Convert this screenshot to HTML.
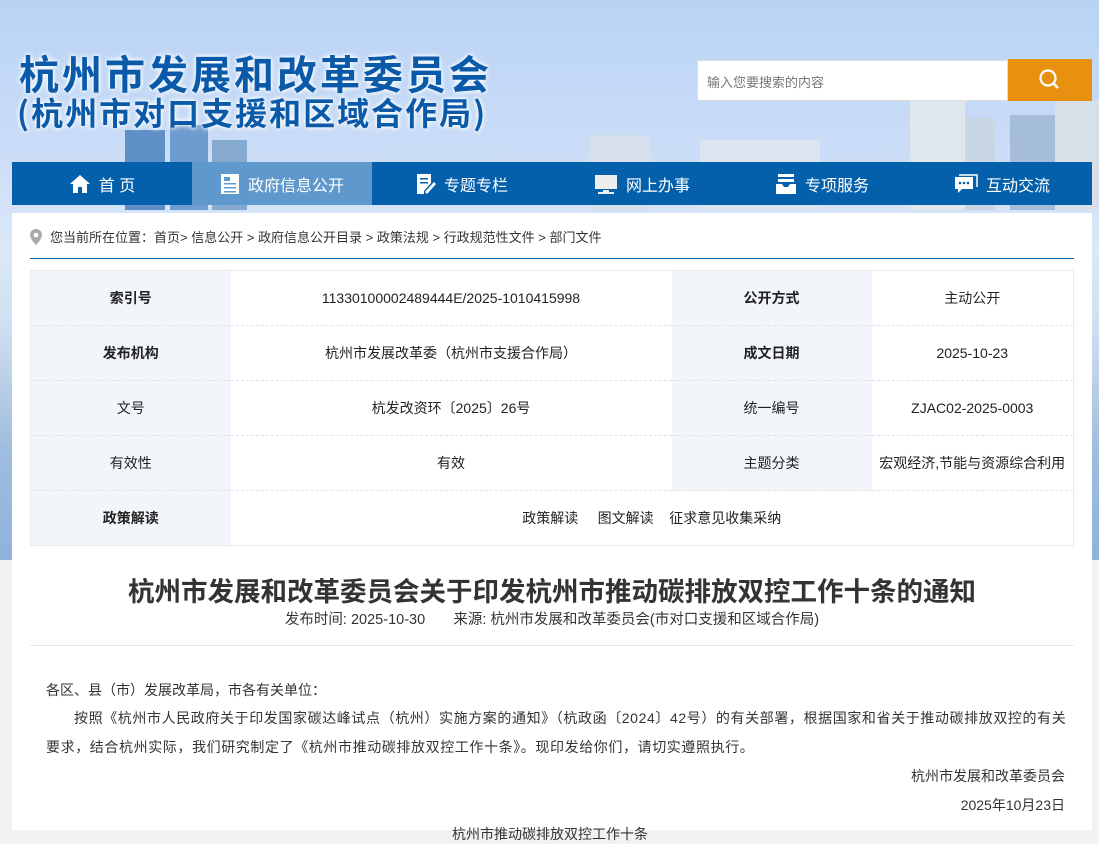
<!DOCTYPE html>
<html><head><meta charset="utf-8"><style>
*{margin:0;padding:0;box-sizing:border-box}
body{width:1099px;height:830px;overflow:hidden;font-family:"Liberation Sans","Noto Sans CJK SC",sans-serif;background:#f2f2f2;position:relative}
.bg{position:absolute;left:0;top:0;width:1099px;height:560px;background:linear-gradient(180deg,#b9d3f5 0%,#c9dcf7 25%,#dbe8f8 45%,#cfe0f2 58%,#b8cde4 70%,#9fbedf 80%,#8fb3dc 100%)}
.bld{position:absolute;background:#7fa6d0}
.logo1{position:absolute;left:19px;top:48px;font-size:40px;font-weight:bold;color:#0b5aa9;letter-spacing:3px;text-shadow:0 0 4px #fff,0 0 6px #fff;font-family:"Noto Sans CJK SC",sans-serif;line-height:48px}
.logo2{position:absolute;left:17px;top:92px;font-size:32px;font-weight:bold;color:#0b5aa9;letter-spacing:2px;text-shadow:0 0 4px #fff,0 0 6px #fff;font-family:"Noto Sans CJK SC",sans-serif;line-height:40px}
.search{position:absolute;left:697px;top:60px;width:311px;height:41px;background:#fff;border:1px solid #ddd;font-size:13px;color:#777;padding:11px 9px}
.sbtn{position:absolute;left:1008px;top:59px;width:84px;height:42px;background:#e8900f}
.nav{position:absolute;left:12px;top:162px;width:1080px;height:43px;background:#0560ab;display:flex}
.nav div{width:180px;height:43px;color:#fff;font-size:16px;display:flex;align-items:center;justify-content:center;gap:8px}
.nav .act{background:#5e98cd}
.main{position:absolute;left:12px;top:213px;width:1080px;height:617px;background:#fff}
.crumb{position:absolute;left:18px;top:14px;font-size:13px;color:#333;display:flex;align-items:center;gap:8px}
.line{position:absolute;left:18px;top:45px;width:1044px;height:1px;background:#0b62b0}
table{position:absolute;left:18px;top:57px;width:1044px;border-collapse:collapse;font-size:14px;color:#222;border:1px solid #e8ecf0}
td{height:55px;text-align:center;border-bottom:1px dashed #e3e3e3}
td.l{background:#f2f6fa;width:200px}
td.b{font-weight:bold}
h1{position:absolute;left:0;width:1080px;top:357px;text-align:center;font-size:26.5px;font-weight:bold;color:#333;font-family:"Noto Sans CJK SC",sans-serif}
.meta{position:absolute;left:0;width:1080px;top:395px;text-align:center;font-size:14.5px;color:#333}
.hr{position:absolute;left:18px;top:432px;width:1044px;height:1px;background:#e8e8e8}
.p{position:absolute;left:34px;font-size:14px;color:#333;line-height:20px}
.r{position:absolute;right:27px;font-size:14px;color:#333}
</style></head><body>
<div class="bg">
<div class="bld" style="left:125px;top:130px;width:40px;height:80px;background:#5f8fc7"></div>
<div class="bld" style="left:170px;top:125px;width:38px;height:85px;background:#6f9ccf"></div>
<div class="bld" style="left:212px;top:140px;width:35px;height:70px;background:#86a9cf"></div>
<div class="bld" style="left:910px;top:100px;width:55px;height:110px;background:#dfe6ee"></div>
<div class="bld" style="left:965px;top:118px;width:30px;height:92px;background:#c9d7e5"></div>
<div class="bld" style="left:1010px;top:115px;width:45px;height:95px;background:#a5bdd8"></div>
<div class="bld" style="left:1055px;top:100px;width:44px;height:110px;background:#d7dfe9"></div>
<div class="bld" style="left:590px;top:135px;width:60px;height:75px;background:#d5e0ec"></div>
<div class="bld" style="left:700px;top:140px;width:120px;height:70px;background:#dce5ef"></div>
</div>
<div class="logo1">杭州市发展和改革委员会</div>
<div class="logo2">(杭州市对口支援和区域合作局)</div>
<div class="search">输入您要搜索的内容</div>
<div class="sbtn"><svg width="84" height="42"><circle cx="40" cy="19" r="7.5" fill="none" stroke="#fff" stroke-width="2.2"/><line x1="45.5" y1="24.5" x2="50" y2="29" stroke="#fff" stroke-width="2.5"/></svg></div>
<div class="nav">
<div><svg width="22" height="20"><path d="M11 1 L1 10 L4 10 L4 19 L9 19 L9 13 L13 13 L13 19 L18 19 L18 10 L21 10 Z" fill="#fff"/></svg>首 页</div>
<div class="act"><svg width="20" height="22"><rect x="1" y="1" width="18" height="20" fill="#fff"/><rect x="4" y="4" width="6" height="4" fill="#5e98cd"/><rect x="4" y="10" width="12" height="1.5" fill="#5e98cd"/><rect x="4" y="14" width="12" height="1.5" fill="#5e98cd"/><rect x="4" y="18" width="12" height="1.5" fill="#5e98cd"/></svg>政府信息公开</div>
<div><svg width="20" height="22"><path d="M1 1 H15 V10 L8 18 V21 H1 Z" fill="#fff"/><path d="M9 19 L18 9 L20 11 L11 21 Z" fill="#fff"/><rect x="4" y="5" width="8" height="1.5" fill="#0560ab"/><rect x="4" y="9" width="8" height="1.5" fill="#0560ab"/></svg>专题专栏</div>
<div><svg width="24" height="22"><rect x="1" y="2" width="22" height="14" fill="#eee"/><rect x="9" y="17" width="6" height="2" fill="#eee"/><rect x="4" y="19" width="16" height="2" fill="#eee"/></svg>网上办事</div>
<div><svg width="22" height="22"><rect x="3" y="1" width="16" height="3" fill="#fff"/><rect x="3" y="6" width="16" height="3" fill="#fff"/><path d="M1 11 H7 L9 14 H13 L15 11 H21 V21 H1 Z" fill="#fff"/></svg>专项服务</div>
<div><svg width="24" height="22"><path d="M1 4 H19 V16 H8 L4 20 V16 H1 Z" fill="#fff"/><path d="M5 2 H23 V14" fill="none" stroke="#fff" stroke-width="1.5"/><circle cx="6" cy="10" r="1.3" fill="#0560ab"/><circle cx="10" cy="10" r="1.3" fill="#0560ab"/><circle cx="14" cy="10" r="1.3" fill="#0560ab"/></svg>互动交流</div>
</div>
<div class="main">
<div class="crumb"><svg width="12" height="16"><path d="M6 0 C2.5 0 0 2.6 0 6 C0 10 6 16 6 16 C6 16 12 10 12 6 C12 2.6 9.5 0 6 0Z" fill="#aaa"/><circle cx="6" cy="6" r="2.3" fill="#fff"/></svg>您当前所在位置：首页&gt; 信息公开 &gt; 政府信息公开目录 &gt; 政策法规 &gt; 行政规范性文件 &gt; 部门文件</div>
<div class="line"></div>
<table>
<tr><td class="l b">索引号</td><td style="width:441px">11330100002489444E/2025-1010415998</td><td class="l b">公开方式</td><td>主动公开</td></tr>
<tr><td class="l b">发布机构</td><td>杭州市发展改革委（杭州市支援合作局）</td><td class="l b">成文日期</td><td>2025-10-23</td></tr>
<tr><td class="l">文号</td><td>杭发改资环〔2025〕26号</td><td class="l">统一编号</td><td>ZJAC02-2025-0003</td></tr>
<tr><td class="l">有效性</td><td>有效</td><td class="l">主题分类</td><td>宏观经济,节能与资源综合利用</td></tr>
<tr><td class="l b">政策解读</td><td colspan="3">政策解读&nbsp;&nbsp;&nbsp;&nbsp;&nbsp;图文解读&nbsp;&nbsp;&nbsp;&nbsp;征求意见收集采纳</td></tr>
</table>
<h1>杭州市发展和改革委员会关于印发杭州市推动碳排放双控工作十条的通知</h1>
<div class="meta">发布时间: 2025-10-30&nbsp;&nbsp;&nbsp;&nbsp;&nbsp;&nbsp;&nbsp;来源: 杭州市发展和改革委员会(市对口支援和区域合作局)</div>
<div class="hr"></div>
<div class="p" style="top:467px">各区、县（市）发展改革局，市各有关单位：</div>
<div class="p" style="top:491px;width:1022px;line-height:29px;text-indent:2em;letter-spacing:0.6px">按照《杭州市人民政府关于印发国家碳达峰试点（杭州）实施方案的通知》（杭政函〔2024〕42号）的有关部署，根据国家和省关于推动碳排放双控的有关要求，结合杭州实际，我们研究制定了《杭州市推动碳排放双控工作十条》。现印发给你们，请切实遵照执行。</div>
<div class="r" style="top:553px">杭州市发展和改革委员会</div>
<div class="r" style="top:582px">2025年10月23日</div>
<div class="p" style="top:611px;left:440px">杭州市推动碳排放双控工作十条</div>
</div>
</body></html>
